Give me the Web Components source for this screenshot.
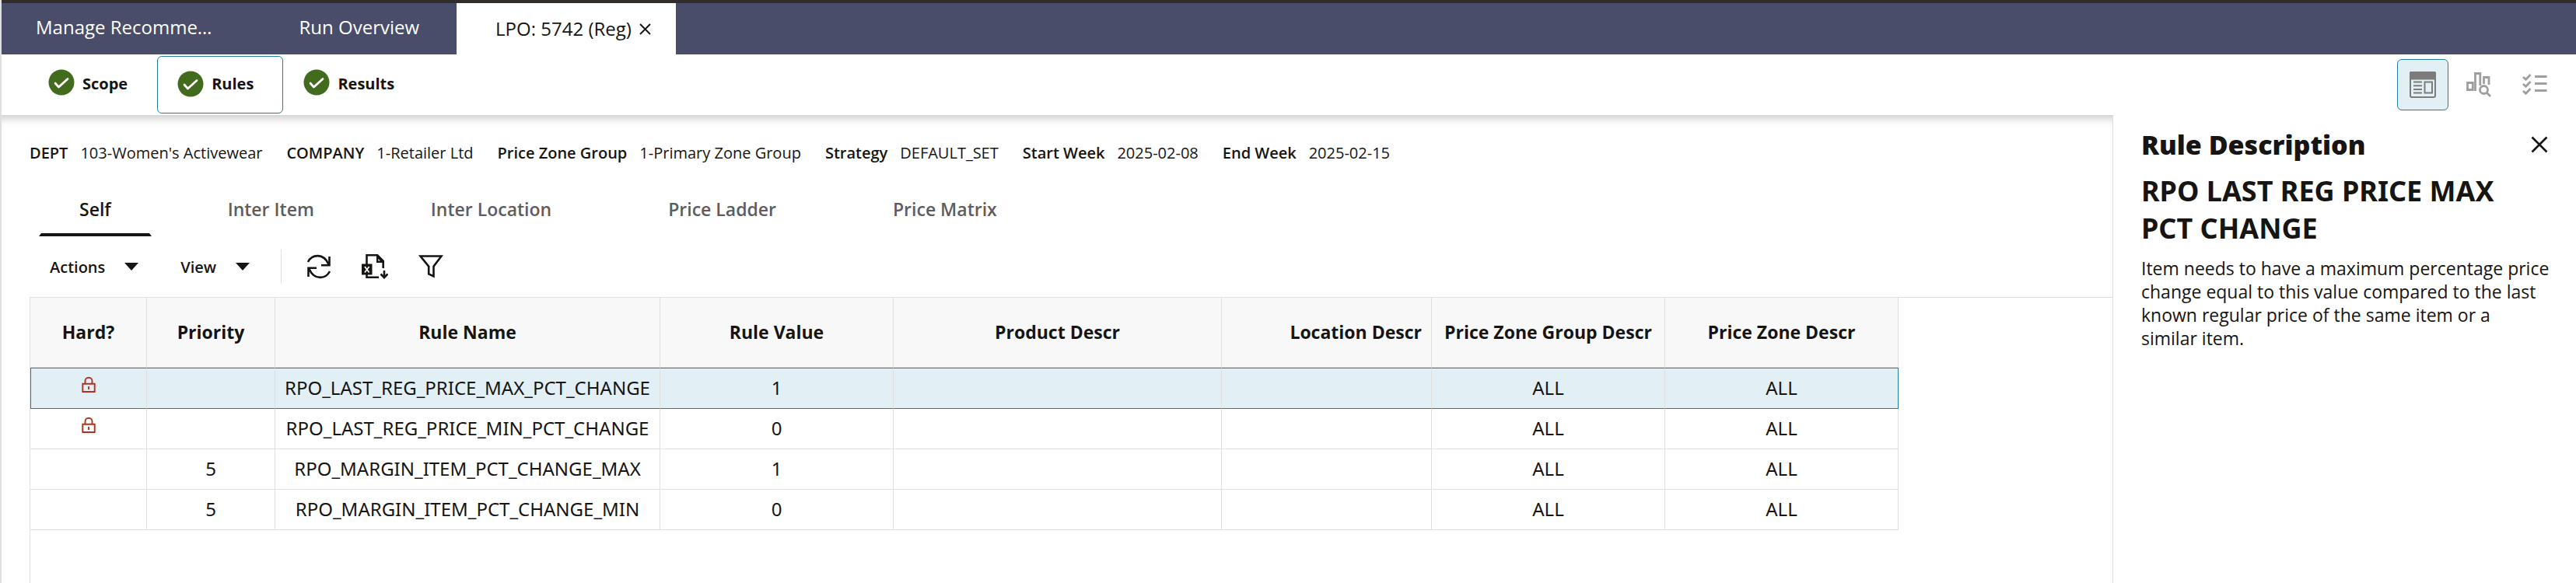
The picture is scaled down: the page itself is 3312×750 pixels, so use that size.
<!DOCTYPE html>
<html lang="en">
<head>
<meta charset="utf-8">
<title>LPO: 5742 (Reg)</title>
<style>
  html, body {
    margin: 0;
    height: 100%;
  }
  body {
    background-color: #fff;
    color: #161513;
    font-family: "Open Sans", "Noto Sans", sans-serif;
  }
</style>
</head>
<body>
<price-app></price-app>

<script>
const ICONS = {
  check: `<svg width="34" height="34" viewBox="0 0 34 34"><circle cx="17" cy="17" r="16.5" fill="#436b1d"/><path d="M9 18l4.500 5L25 12.500" fill="none" stroke="#fff" stroke-width="2.8" stroke-linecap="round" stroke-linejoin="round"/></svg>`,
  close: `<svg width="22" height="22" viewBox="0 0 22 22" fill="none" stroke="currentColor" stroke-width="2.6"><path d="M1.5 1.5l19 19M20.5 1.5l-19 19"/></svg>`,
  tabClose: `<svg width="15" height="15" viewBox="0 0 15 15" fill="none" stroke="currentColor" stroke-width="1.9"><path d="M1 1l13 13M14 1L1 14"/></svg>`,
  caret: `<svg width="18" height="10" viewBox="0 0 18 10"><path d="M0 0h18L9 10z" fill="currentColor"/></svg>`,
  refresh: `<svg width="32" height="32" viewBox="0 0 32 32" fill="none" stroke="currentColor" stroke-width="2.6"><path d="M2 10C7 0 22-2 28.5 13M29.5 3v11.2H19M30 22C25 32 10 34 3.500 19M2.500 29V17.800H13"/></svg>`,
  excel: `<svg width="34" height="32" viewBox="0 0 34 32"><path d="M6.500 13V1.300h13.700l7.500 7.500V18M6.500 24v5.700H22" fill="none" stroke="currentColor" stroke-width="2.600"/><path d="M19 1h1.500L28 8.500V11h-9z" fill="currentColor"/><path d="M21.300 6v2.600h2.600z" fill="#fff"/><path d="M0 12.500h13.500v14H0z" fill="currentColor"/><path d="M4 16l5.600 7.500M9.600 16L4 23.500" stroke="#fff" stroke-width="1.700"/><path d="M29 21v9.500M24.500 25.500L29 30.200l4.500-4.700" fill="none" stroke="currentColor" stroke-width="2.600"/></svg>`,
  filter: `<svg width="32" height="30" viewBox="0 0 32 30" fill="none" stroke="currentColor" stroke-width="2.600"><path d="M2.500 1.500h27L19.500 14.800V27.500l-6.300-3V14.800z"/></svg>`,
  lock: `<svg width="18" height="20" viewBox="0 0 18 20" fill="none" stroke="#b3311f" stroke-width="1.900"><path d="M1.300 8.800h15.400v10.200H1.300zM4.500 8.500V5a4.500 4.200 0 0 1 9 0v3.500"/><path d="M9 12v4"/></svg>`,
  layout: `<svg width="34" height="34" viewBox="0 0 34 34" fill="none" stroke="#7b7c7b" stroke-width="2"><rect x="1" y="1" width="32" height="32" rx="2"/><path d="M0 2q0-2 2-2h30q2 0 2 2v8.500H0z" fill="#7b7c7b" stroke="none"/><path d="M5 13.500h11M5 18.300h11M5 23.100h11M5 27.500h11"/><rect x="19.500" y="13.500" width="9.500" height="14"/></svg>`,
  chart: `<svg width="32" height="32" viewBox="0 0 32 32" fill="none" stroke="#a09f9e" stroke-width="2.800"><path d="M1.500 13.500h6.800v9H1.500zM11.500 24V1.500h6.300V17M22.500 15V6.500h6.500V16"/><circle cx="22.500" cy="22.500" r="5"/><path d="M26 26l5 5"/></svg>`,
  checklist: `<svg width="32" height="28" viewBox="0 0 32 28" fill="none" stroke="#a09f9e" stroke-width="2.800"><path d="M16 3.500h15.500M16 12.500h15.500M16 21.500h15.500"/><path d="M1 4l3.500 3.200L10.500 1M1 13l3.500 3.200 6-6.200M1 22l3.500 3.200 6-6.200"/></svg>`,
};

const RESET = `
  * { box-sizing: border-box; }
  svg { display: block; }
  button {
    border: 0;
    padding: 0;
    background: none;
    color: inherit;
    font: inherit;
    cursor: pointer;
  }
`;

class BaseElement extends HTMLElement {
  constructor() {
    super();
    this.attachShadow({ mode: 'open' });
  }

  connectedCallback() {
    this.shadowRoot.innerHTML = `<style>${RESET}</style>${this.getTemplate()}`;
  }
}

class AppIcon extends BaseElement {
  getTemplate() {
    return `
      <style>
        :host { display: block; flex: none; }
      </style>
      ${ICONS[this.getAttribute('name')]}
    `;
  }
}

// top bar with the open task tabs
class TaskTabs extends BaseElement {
  getTemplate() {
    return `
      <style>
        :host {
          display: flex;
          height: 70px;
          border-top: 4px solid #312d2a;
          background-color: #494d69;
          color: #fff;
          font-size: 24px;
          line-height: 32px;
        }
        button {
          padding: 0 56px 4px 44px;
          white-space: nowrap;
        }
        .overview { padding: 0 48px 4px 56px; }
        .active {
          display: flex;
          align-items: center;
          gap: 10px;
          padding: 0 32px 0 50px;
          background-color: #fff;
          color: #161513;
        }
        .active button { padding: 0; }
      </style>
      <button>Manage Recomme…</button>
      <button class="overview">Run Overview</button>
      <div class="active">
        <span>LPO: 5742 (Reg)</span>
        <button aria-label="Close tab"><app-icon name="tabClose"></app-icon></button>
      </div>
    `;
  }
}

class StepButton extends BaseElement {
  getTemplate() {
    return `
      <style>
        :host { display: block; }
        button {
          display: flex;
          gap: 10px;
          height: 74px;
          padding: 16px 37px 0 25px;
          border: 1px solid transparent;
          border-radius: 6px;
          font-size: 20px;
          font-weight: 700;
          line-height: 38px;
        }
        :host([current]) button {
          padding-top: 18px;
          border-color: #227e9e;
          line-height: 34px;
        }
      </style>
      <button>
        <app-icon name="check"></app-icon>
        <slot></slot>
      </button>
    `;
  }
}

class StepBar extends BaseElement {
  getTemplate() {
    return `
      <style>
        :host {
          display: flex;
          justify-content: space-between;
          height: 78px;
          padding: 2px 20px 0 34px;
          background-color: #fff;
        }
        .steps, .views { display: flex; }
        .views { padding-top: 4px; gap: 6px; }
        .views button {
          display: flex;
          align-items: center;
          justify-content: center;
          width: 66px;
          height: 66px;
          border: 1px solid transparent;
          border-radius: 6px;
        }
        .views .on {
          border-color: #227e9e;
          background-color: #e2f0f6;
        }
      </style>
      <div class="steps">
        <step-button>Scope</step-button>
        <step-button current>Rules</step-button>
        <step-button>Results</step-button>
      </div>
      <div class="views">
        <button class="on" aria-label="Details"><app-icon name="layout"></app-icon></button>
        <button aria-label="Analysis"><app-icon name="chart"></app-icon></button>
        <button aria-label="Checklist"><app-icon name="checklist"></app-icon></button>
      </div>
    `;
  }
}

class RunSummary extends BaseElement {
  getTemplate() {
    const items = [
      ['DEPT', "103-Women's Activewear"],
      ['COMPANY', '1-Retailer Ltd'],
      ['Price Zone Group', '1-Primary Zone Group'],
      ['Strategy', 'DEFAULT_SET'],
      ['Start Week', '2025-02-08'],
      ['End Week', '2025-02-15'],
    ];
    return `
      <style>
        :host { display: block; }
        dl {
          display: flex;
          gap: 31px;
          margin: 0;
          font-size: 20px;
          line-height: 28px;
          white-space: nowrap;
        }
        div { display: flex; gap: 16px; }
        dt { font-weight: 600; }
        dd { margin: 0; }
      </style>
      <dl>
        ${items.map(([key, value]) => `<div><dt>${key}</dt><dd>${value}</dd></div>`).join('')}
      </dl>
    `;
  }
}

class RuleTabs extends BaseElement {
  getTemplate() {
    const tabs = ['Self', 'Inter Item', 'Inter Location', 'Price Ladder', 'Price Matrix'];
    return `
      <style>
        :host {
          display: flex;
          gap: 46px;
          padding-left: 12px;
        }
        button {
          height: 64px;
          padding: 0 52px 6px;
          color: #5f5d5b;
          font-size: 23px;
          font-weight: 600;
          line-height: 32px;
          white-space: nowrap;
        }
        .selected {
          padding: 0 49px 2px;
          border: 0 solid transparent;
          border-width: 0 3px 4px;
          border-bottom-color: #161513;
          color: #161513;
        }
      </style>
      ${tabs.map((tab, i) => `<button class="${i === 0 ? 'selected' : ''}">${tab}</button>`).join('')}
    `;
  }
}

class RuleToolbar extends BaseElement {
  getTemplate() {
    return `
      <style>
        :host {
          display: flex;
          align-items: center;
          height: 44px;
          padding-left: 26px;
          font-size: 20px;
          font-weight: 600;
        }
        .menu {
          display: flex;
          align-items: center;
          gap: 25px;
          line-height: 28px;
          margin-right: 54px;
        }
        .menu span { padding-top: 2px; }
        .menu + .menu { margin-right: 0; }
        .icons {
          display: flex;
          align-items: center;
          gap: 39px;
          height: 44px;
          margin-left: 40px;
          padding-left: 32px;
          border-left: 1px solid #e0e0e0;
        }
      </style>
      <button class="menu"><span>Actions</span><app-icon name="caret"></app-icon></button>
      <button class="menu"><span>View</span><app-icon name="caret"></app-icon></button>
      <div class="icons">
        <button aria-label="Refresh"><app-icon name="refresh"></app-icon></button>
        <button aria-label="Export to Excel"><app-icon name="excel"></app-icon></button>
        <button aria-label="Filter"><app-icon name="filter"></app-icon></button>
      </div>
    `;
  }
}

class RuleTable extends BaseElement {
  getTemplate() {
    const columns = [
      ['Hard?', 150],
      ['Priority', 165],
      ['Rule Name', 495],
      ['Rule Value', 300],
      ['Product Descr', 422],
      ['Location Descr', 270],
      ['Price Zone Group Descr', 300],
      ['Price Zone Descr', 300],
    ];
    const rules = [
      { hard: true, priority: '', name: 'RPO_LAST_REG_PRICE_MAX_PCT_CHANGE', value: 1 },
      { hard: true, priority: '', name: 'RPO_LAST_REG_PRICE_MIN_PCT_CHANGE', value: 0 },
      { hard: false, priority: 5, name: 'RPO_MARGIN_ITEM_PCT_CHANGE_MAX', value: 1 },
      { hard: false, priority: 5, name: 'RPO_MARGIN_ITEM_PCT_CHANGE_MIN', value: 0 },
    ];
    return `
      <style>
        :host {
          display: block;
          flex: 1;
          border: 0 solid #e0e0df;
          border-width: 1px 0 0 1px;
        }
        table {
          width: 2402px;
          table-layout: fixed;
          border-collapse: separate;
          border-spacing: 0;
        }
        th, td {
          padding: 0 0 1px;
          border: 0 solid #dfdfde;
          border-width: 0 1px 1px 0;
          text-align: center;
          white-space: nowrap;
          line-height: 32px;
        }
        th {
          height: 90px;
          background-color: #f8f8f8;
          font-size: 23px;
          font-weight: 700;
        }
        th.end { padding-right: 12px; text-align: right; }
        td {
          height: 52px;
          font-family: "Noto Sans", "Open Sans", sans-serif;
          font-size: 24px;
        }
        app-icon { width: 18px; margin: -8px auto 0; }
        .selected td {
          height: 53px;
          background-color: #e2f0f6;
          border-top: 1px solid #227e9e;
          border-bottom-color: #227e9e;
        }
        .selected td:first-child { border-left: 1px solid #227e9e; }
        .selected td:last-child { border-right-color: #227e9e; }
      </style>
      <table>
        <colgroup>${columns.map(([, width]) => `<col style="width: ${width}px">`).join('')}</colgroup>
        <thead>
          <tr>${columns.map(([title]) => `<th class="${title === 'Location Descr' ? 'end' : ''}">${title}</th>`).join('')}</tr>
        </thead>
        <tbody>
          ${rules.map((rule, i) => `
            <tr class="${i === 0 ? 'selected' : ''}">
              <td>${rule.hard ? '<app-icon name="lock"></app-icon>' : ''}</td>
              <td>${rule.priority}</td>
              <td>${rule.name}</td>
              <td>${rule.value}</td>
              <td></td>
              <td></td>
              <td>ALL</td>
              <td>ALL</td>
            </tr>`).join('')}
        </tbody>
      </table>
    `;
  }
}

class RuleDescription extends BaseElement {
  getTemplate() {
    return `
      <style>
        :host {
          display: block;
          flex: none;
          width: 596px;
          padding: 12px 26px 0 36px;
          border-left: 1px solid #dfdfde;
        }
        header {
          display: flex;
          align-items: center;
          justify-content: space-between;
          padding-right: 10px;
        }
        h1, h2, p { margin: 0; }
        h1 {
          font-size: 34px;
          font-weight: 800;
          line-height: 52px;
        }
        h2 {
          padding: 10px 24px 0 0;
          font-family: "Noto Sans", "Open Sans", sans-serif;
          font-size: 36px;
          font-weight: 700;
          line-height: 48px;
        }
        p {
          padding-top: 12px;
          font-size: 23px;
          line-height: 30px;
        }
      </style>
      <header>
        <h1>Rule Description</h1>
        <button aria-label="Close"><app-icon name="close"></app-icon></button>
      </header>
      <h2><slot name="rule"></slot></h2>
      <p><slot></slot></p>
    `;
  }
}

class PriceApp extends BaseElement {
  getTemplate() {
    return `
      <style>
        :host {
          display: flex;
          flex-direction: column;
          min-height: 100%;
          border-left: 2px solid #dfdfde;
        }
        .body {
          display: flex;
          flex: 1;
        }
        main {
          display: flex;
          flex: 1;
          flex-direction: column;
          min-width: 0;
          padding: 35px 0 0 36px;
          box-shadow: inset 0 12px 12px -8px rgba(0, 0, 0, 0.22);
        }
        rule-tabs { margin-top: 29px; }
        rule-toolbar { margin: 17px 0; }
      </style>
      <task-tabs></task-tabs>
      <step-bar></step-bar>
      <div class="body">
        <main>
          <run-summary></run-summary>
          <rule-tabs></rule-tabs>
          <rule-toolbar></rule-toolbar>
          <rule-table></rule-table>
        </main>
        <rule-description>
          <span slot="rule">RPO LAST REG PRICE MAX PCT CHANGE</span>
          Item needs to have a maximum percentage price change equal to this value compared to the last known regular price of the same item or a<br>similar item.
        </rule-description>
      </div>
    `;
  }
}

customElements.define('app-icon', AppIcon);
customElements.define('task-tabs', TaskTabs);
customElements.define('step-button', StepButton);
customElements.define('step-bar', StepBar);
customElements.define('run-summary', RunSummary);
customElements.define('rule-tabs', RuleTabs);
customElements.define('rule-toolbar', RuleToolbar);
customElements.define('rule-table', RuleTable);
customElements.define('rule-description', RuleDescription);
customElements.define('price-app', PriceApp);
</script>
</body>
</html>
